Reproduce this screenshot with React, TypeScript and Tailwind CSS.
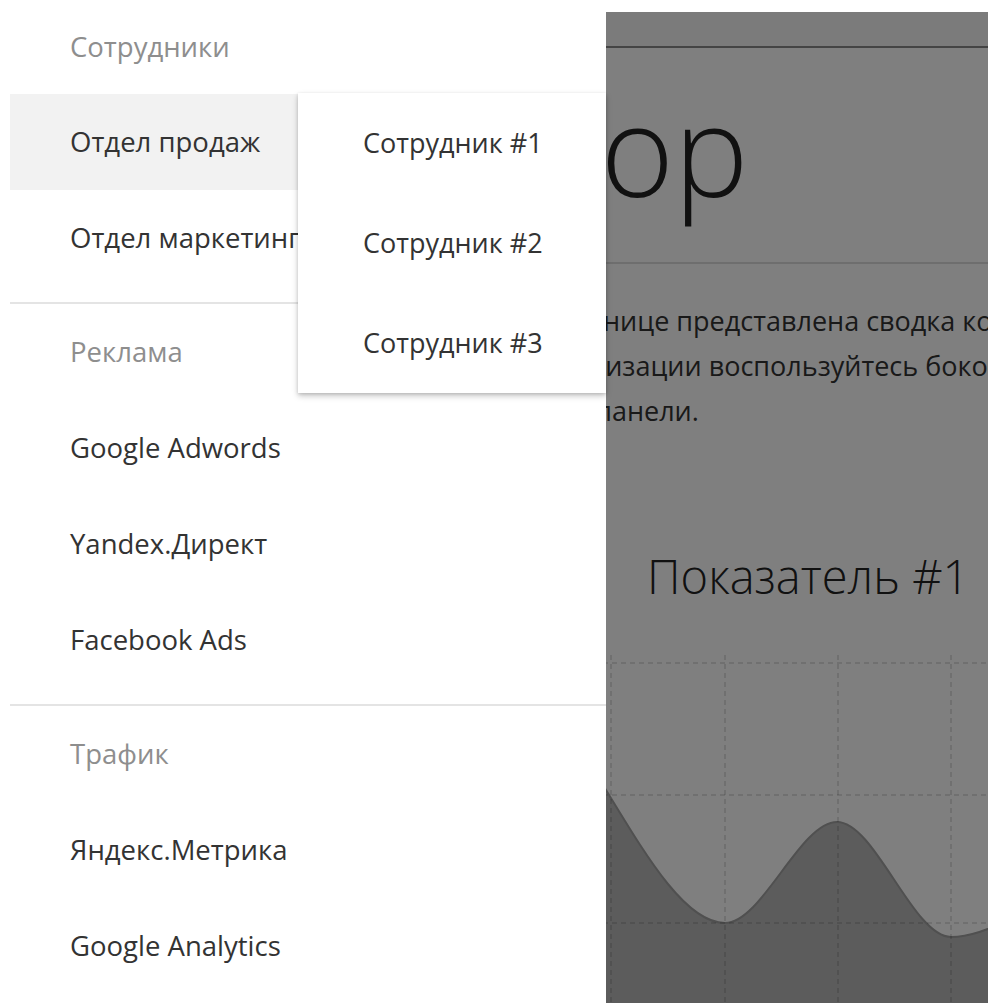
const sections = [
  { title: "Сотрудники", items: ["Отдел продаж", "Отдел маркетинга"] },
  { title: "Реклама", items: ["Google Adwords", "Yandex.Директ", "Facebook Ads"] },
  { title: "Трафик", items: ["Яндекс.Метрика", "Google Analytics"] },
];

const employees = ["Сотрудник #1", "Сотрудник #2", "Сотрудник #3"];

const curve =
  "M306 770 C 380 700, 440 675, 498 675 C 574 675, 649 923, 725 923 C 762 923, 800 822, 837 822 C 875 822, 913 937, 951 937 C 989 937, 1026 905, 1064 905";

function Chart() {
  const gridX = [384, 498, 611, 725, 838, 951];
  const gridY = [663, 795, 923];
  return (
    <svg width={682} height={348} viewBox="306 655 682 348" className="block">
      <path d={`${curve} L 1064 1003 L 306 1003 Z`} fill="#b8b8b8" />
      <path d={curve} fill="none" stroke="#a0a0a0" strokeWidth={2} />
      {gridY.map((y) => (
        <line key={y} x1={306} x2={988} y1={y} y2={y} stroke="rgba(0,0,0,0.16)" strokeWidth={1.5} strokeDasharray="5 4" />
      ))}
      {gridX.map((x) => (
        <line key={x} x1={x} x2={x} y1={655} y2={1003} stroke="rgba(0,0,0,0.16)" strokeWidth={1.5} strokeDasharray="5 4" />
      ))}
    </svg>
  );
}

export default function App() {
  return (
    <div className="relative h-[1003px] w-[988px] overflow-hidden bg-white [font-family:'Open_Sans',sans-serif]">
      {/* page underneath the drawer */}
      <div className="pt-[12px]">
        <header className="h-[36px] border-b-2 border-[#888] bg-[#f6f6f6]" />
        <main className="ml-[306px] w-[682px]">
          <h1 className="mt-[38px] ml-[71px] whitespace-nowrap text-[125px] font-light leading-[125px] text-[#222]">
            Обзор
          </h1>
          <div className="mt-[51px] h-[2px] bg-[#dcdcdc]" />
          <div className="mt-[34px] flex flex-col items-center whitespace-nowrap text-[27px] leading-[45px] text-[#333]">
            <span>Добро пожаловать! На этой странице представлена сводка конкретных</span>
            <span>показателей. Для их детализации воспользуйтесь боковой</span>
            <span>панели.</span>
          </div>
          <section className="mt-[117px]">
            <h2 className="pl-[341px] whitespace-nowrap text-[47px] font-light leading-[52px] text-[#222]">
              Показатель #1
            </h2>
            <div className="mt-[53px]">
              <Chart />
            </div>
          </section>
        </main>
      </div>

      {/* dimmed backdrop */}
      <div className="absolute inset-x-0 top-[12px] bottom-0 bg-black/50" />

      {/* navigation drawer */}
      <aside className="absolute left-0 top-0 h-full w-[606px] bg-white">
        <nav className="ml-[10px]">
          {sections.map((s, si) => (
            <div key={s.title}>
              {si > 0 && <div className="h-[2px] bg-[#e4e4e4]" />}
              <div className={`${si === 0 ? "h-[94px]" : "h-[96px]"} flex items-center pl-[60px] text-[27.5px] text-[#8e8e8e]`}>
                {s.title}
              </div>
              {s.items.map((it, ii) => (
                <div
                  key={it}
                  className={`flex h-[96px] items-center whitespace-nowrap pl-[60px] text-[27.5px] text-[#333] ${si === 0 && ii === 0 ? "bg-[#f2f2f2]" : ""}`}
                >
                  {it}
                </div>
              ))}
              <div className="h-[16px]" />
            </div>
          ))}
        </nav>

        {/* submenu of the hovered department */}
        <div className="absolute left-[298px] top-[93px] w-[308px] bg-white shadow-[0_3px_6px_rgba(0,0,0,0.22),0_1px_3px_rgba(0,0,0,0.12)]">
          {employees.map((e) => (
            <div key={e} className="flex h-[100px] items-center pl-[65px] text-[27px] text-[#333]">
              {e}
            </div>
          ))}
        </div>
      </aside>
    </div>
  );
}
